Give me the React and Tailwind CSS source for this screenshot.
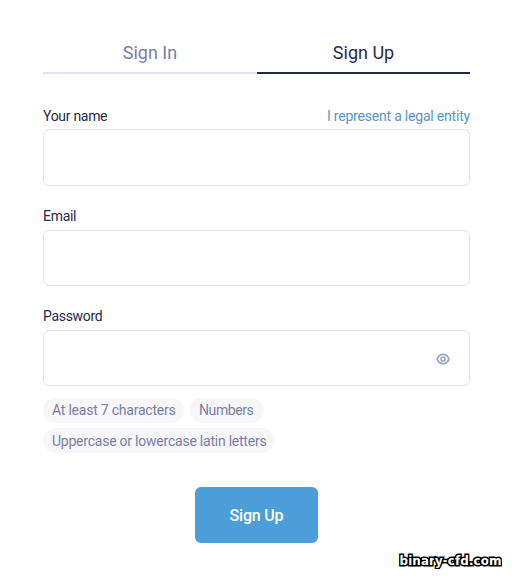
import { useState } from 'react'

const rules = [
  { text: 'At least 7 characters', className: 'w-[141px] leading-[25px] tracking-[-0.22px]' },
  { text: 'Numbers', className: 'w-[74px] leading-[25px] tracking-[-0.4px]' },
  { text: 'Uppercase or lowercase latin letters', className: 'w-[232px] leading-[27px] tracking-[-0.23px]' },
]

function EyeIcon() {
  return (
    <svg width="14" height="12" viewBox="0 0 14 12" fill="none" stroke="#a0a5c6">
      <path d="M1 6C2.2 3 4.4 1.3 7 1.3S11.8 3 13 6C11.8 9 9.6 10.7 7 10.7S2.2 9 1 6Z" strokeWidth="1.8" />
      <circle cx="7" cy="6" r="2" strokeWidth="1.7" />
    </svg>
  )
}

function Field({ label, type = 'text', inputClass = 'h-14', labelClass = 'leading-6', link, children }) {
  return (
    <div>
      <div className={`flex h-[26px] items-start justify-between text-sm ${labelClass}`}>
        <label className="text-[#252a48]">{label}</label>
        {link}
      </div>
      <div className="relative">
        <input
          type={type}
          className={`block w-full rounded-md border border-[#e3e3ee] bg-white px-4 outline-none ${inputClass}`}
        />
        {children}
      </div>
    </div>
  )
}

export default function App() {
  const [visible, setVisible] = useState(false)

  return (
    <div className="h-[579px] w-[512px] bg-white px-[43px] pt-8 font-['Roboto',sans-serif]">
      <div className="flex w-[427px] text-center text-lg leading-10">
        <button className="h-[42px] w-[214px] border-b-2 border-[#e3e3ee] pt-px text-[#7a7ea6]">Sign In</button>
        <button className="h-[42px] w-[213px] border-b-2 border-[#252a48] pt-px text-[#252a48]">Sign Up</button>
      </div>

      <form className="w-[427px] pt-[29px]" onSubmit={(e) => e.preventDefault()}>
        <div className="flex flex-col gap-[18px]">
          <Field
            label="Your name"
            inputClass="h-[57px]"
            labelClass="leading-[26px] tracking-[-0.3px]"
            link={<a href="#" className="tracking-[-0.2px] text-[#5197d1]">I represent a legal entity</a>}
          />
          <Field label="Email" labelClass="leading-6 tracking-[-0.3px]" />
          <Field label="Password" labelClass="leading-6 tracking-[-0.3px]" type={visible ? 'text' : 'password'}>
            <button
              type="button"
              aria-label="Show password"
              onClick={() => setVisible(!visible)}
              className="absolute top-[23px] right-5"
            >
              <EyeIcon />
            </button>
          </Field>
        </div>

        <div className="mt-3 flex flex-wrap gap-x-1.5 gap-y-[5px]">
          {rules.map((rule) => (
            <span
              key={rule.text}
              className={`h-[25px] rounded-full bg-[#f7f7fa] pl-[9px] text-sm whitespace-nowrap text-[#7a7ea6] ${rule.className}`}
            >
              {rule.text}
            </span>
          ))}
        </div>

        <button className="mx-auto mt-[34px] block h-14 w-[123px] rounded-md bg-[#4c9ed8] pt-0.5 text-base font-medium tracking-[-0.2px] text-white">
          Sign Up
        </button>
      </form>

      <div className="mt-2 -mr-[33px] flex justify-end">
        <svg width="106" height="18">
          <text
            x="3.5"
            y="14"
            textLength="102"
            className="fill-white stroke-black stroke-[3px] font-['DejaVu_Sans',sans-serif] text-[12px] font-bold [paint-order:stroke]"
          >
            binary-cfd.com
          </text>
        </svg>
      </div>
    </div>
  )
}
